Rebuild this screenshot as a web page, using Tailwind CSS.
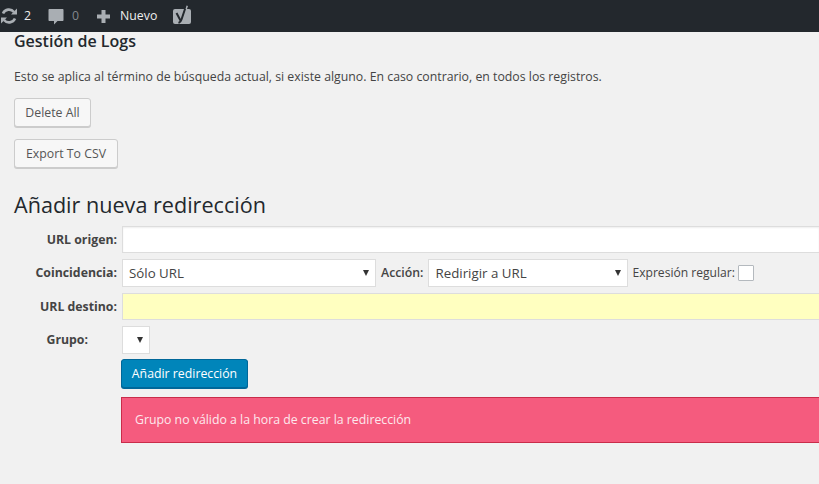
<!DOCTYPE html>
<html lang="es">
<head>
    <meta charset="UTF-8">
    <title>Gestión de Logs</title>
    <script src="https://cdn.jsdelivr.net/npm/@tailwindcss/browser@4"></script>
</head>
<body class="bg-[#f1f1f1] font-['Open_Sans',sans-serif] text-[12.3px] text-[#444] overflow-hidden h-[484px]">
    <!-- admin bar -->
    <div class="h-8 bg-[#23282d] flex items-center text-[12.3px] text-[#eee]">
        <svg class="w-[18px] h-[18px] text-[#a9aeb3]" viewBox="0 0 18 18" fill="none" stroke="currentColor" stroke-width="2.600">
            <path d="M3 6.500A6.500 6.500 0 0 1 14 5"/>
            <path d="M15 11.500A6.500 6.500 0 0 1 4 13"/>
            <path d="M11 7.500h6v-6z" fill="currentColor" stroke="none"/>
            <path d="M7 10.500H1v6z" fill="currentColor" stroke="none"/>
        </svg>
        <span class="ml-[6px]">2</span>
        <svg class="w-[16px] h-[17px] ml-[17px] text-[#a9aeb3]" viewBox="0 0 16 17" fill="currentColor">
            <path d="M1.500 1h13c.6 0 1 .4 1 1v10c0 .6-.4 1-1 1H9.500L6 16.500V13H1.500c-.6 0-1-.4-1-1V2c0-.6.4-1 1-1z"/>
        </svg>
        <span class="ml-[8px] text-[#82878c]">0</span>
        <svg class="w-[15px] h-[15px] ml-[17px] text-[#a9aeb3]" viewBox="0 0 15 15" fill="currentColor">
            <path d="M5.500 1h4v4.500H14v4H9.500V14h-4V9.500H1v-4h4.500z"/>
        </svg>
        <span class="ml-[9px]">Nuevo</span>
        <svg class="w-[20px] h-[20px] ml-[15px] mt-[-3px] text-[#a9aeb3]" viewBox="0 0 20 20" fill="currentColor">
            <rect x="1" y="4" width="18" height="15" rx="2"/>
            <path d="M4.500 8L8.500 15.500" fill="none" stroke="#23282d" stroke-width="2"/>
            <path d="M14 1L9.500 14.500c-.5 1.700-1.500 3-3 3.500" fill="none" stroke="#23282d" stroke-width="2"/>
            <path d="M14.500 0.500l1.500.5-1 3h-1.500z"/>
        </svg>
    </div>

    <div class="pl-[14px]">
        <h3 class="text-[16px] font-semibold text-[#23282d] leading-5 mt-[-1px]">Gestión de Logs</h3>
        <p class="text-[12.3px] leading-5 mt-[16px]">Esto se aplica al término de búsqueda actual, si existe alguno. En caso contrario, en todos los registros.</p>

        <button class="block h-[29px] w-[77px] mt-[11px] pt-[1px] bg-[#f7f7f7] border border-[#ccc] rounded-[3px] shadow-[0_1px_0_#ccc] text-[12.3px] text-[#555]">Delete All</button>
        <button class="block h-[29px] w-[104px] mt-[12px] pt-[1px] bg-[#f7f7f7] border border-[#ccc] rounded-[3px] shadow-[0_1px_0_#ccc] text-[12.3px] text-[#555]">Export To CSV</button>

        <h2 class="text-[21.6px] leading-[30px] text-[#23282d] mt-[22px]">Añadir nueva redirección</h2>
    </div>

    <!-- form -->
    <div class="mt-[6px]">
        <div class="flex items-center h-[27px]">
            <label class="w-[117px] text-right font-bold pt-[1px]">URL origen:</label>
            <input type="text" class="ml-[5px] flex-1 h-full bg-white border border-r-0 border-[#ddd] shadow-[inset_0_1px_2px_rgba(0,0,0,0.07)]">
        </div>
        <div class="flex items-center h-[28px] mt-[6px]">
            <label class="w-[117px] text-right font-bold pt-[1px]">Coincidencia:</label>
            <div class="ml-[5px] w-[254px] h-full bg-white border border-[#ddd] flex items-center justify-between pl-[6px] pr-[6px]">
                <span class="text-[13.3px] pt-[1px]">Sólo URL</span>
                <span class="w-0 h-0 border-x-[3.500px] border-x-transparent border-t-[6px] border-t-[#333]"></span>
            </div>
            <span class="ml-[5px] font-semibold pt-[1px]">Acción:</span>
            <div class="ml-[5px] w-[200px] h-full bg-white border border-[#ddd] flex items-center justify-between pl-[6px] pr-[6px]">
                <span class="text-[13.3px] pt-[1px]">Redirigir a URL</span>
                <span class="w-0 h-0 border-x-[3.500px] border-x-transparent border-t-[6px] border-t-[#333]"></span>
            </div>
            <span class="ml-[4px] text-[12.1px] pt-[1px]">Expresión regular:</span>
            <input type="checkbox" class="ml-[3px] appearance-none w-4 h-4 bg-white border border-[#b4b9be] rounded-[1px]">
        </div>
        <div class="flex items-center h-[27px] mt-[6px]">
            <label class="w-[117px] text-right font-bold pt-[1px]">URL destino:</label>
            <input type="text" class="ml-[5px] flex-1 h-full bg-[#ffffc0] border border-r-0 border-[#ddd]">
        </div>
        <div class="flex items-center h-[28px] mt-[6px]">
            <label class="w-[88px] text-right font-bold pt-[1px]">Grupo:</label>
            <div class="ml-[34px] w-[28px] h-full bg-white border border-[#ddd] flex items-center justify-end pr-[6px]">
                <span class="w-0 h-0 border-x-[3.500px] border-x-transparent border-t-[6px] border-t-[#333]"></span>
            </div>
        </div>
        <div class="pl-[121px]">
            <button class="block h-[29px] w-[127px] mt-[5px] pt-[1px] bg-[#0085ba] border border-[#006799] rounded-[3px] shadow-[0_1px_0_#006799] text-[12.3px] text-white">Añadir redirección</button>
            <div class="h-[46px] mt-[9px] bg-[#f55b7e] border border-r-0 border-[#c92c4a] flex items-center pl-[13px] pt-[1px] text-[12.3px] text-[#fde8ed]">Grupo no válido a la hora de crear la redirección</div>
        </div>
    </div>
</body>
</html>
